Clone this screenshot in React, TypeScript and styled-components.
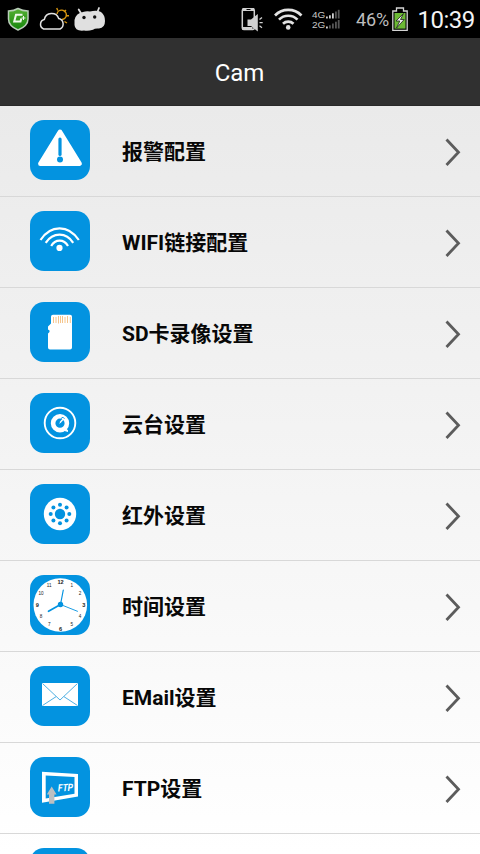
import React from 'react';
import styled, { createGlobalStyle } from 'styled-components';

const GlobalStyle = createGlobalStyle`
  body { margin: 0; overflow: hidden; }
`;

const Screen = styled.div`
  height: 854px;
  width: 480px;
  overflow: hidden;
  display: flex;
  flex-direction: column;
  background: #fff;
  font-family: Roboto, "Noto Sans CJK SC", sans-serif;
`;

const StatusBar = styled.div`
  height: 38px;
  flex: none;
  background: #000;
  display: flex;
  justify-content: space-between;
`;

const StatusArt = styled.svg`
  display: block;
  flex: none;
`;

const StatusRight = styled.div`
  display: flex;
`;

const Percent = styled.span`
  width: 36px;
  font-size: 18px;
  line-height: 40px;
  letter-spacing: -0.15px;
  text-indent: 1px;
  color: #bdbdbd;
  white-space: nowrap;
`;

const Clock = styled.span`
  width: 63px;
  font-size: 24px;
  line-height: 40px;
  letter-spacing: -0.5px;
  text-indent: 0.5px;
  color: #f4f4f4;
  white-space: nowrap;
`;

const TitleBar = styled.header`
  height: 68px;
  flex: none;
  background: #303030;
  color: #fff;
  font-size: 24px;
  line-height: 70px;
  text-align: center;
  text-indent: -1px;
  box-sizing: border-box;
  border-bottom: 1px solid #292929;
`;

const List = styled.main`
  flex: 1;
  overflow: hidden;
  background: linear-gradient(#eaeaea, #fff);
`;

const Row = styled.div`
  height: 91px;
  box-sizing: border-box;
  border-bottom: 1px solid #d8d8d8;
  display: flex;
  align-items: flex-start;
  padding: 14px 19px 0 30px;
`;

const Tile = styled.svg`
  width: 60px;
  height: 60px;
  flex: none;
  border-radius: 14px;
  background: #0393e0;
`;

const Label = styled.span`
  flex: 1;
  margin-left: 32px;
  font-size: 21px;
  font-weight: 700;
  line-height: 64px;
  color: #080808;
  white-space: nowrap;
`;

const Arrow = styled.svg`
  width: 16px;
  height: 30px;
  margin-top: 17px;
`;

const StatusLeftIcons = () => (
  <StatusArt width="110" height="38" viewBox="0 0 110 38">
    <defs>
      <linearGradient id="shield" x2="0" y2="1">
        <stop stopColor="#55b034" />
        <stop offset="1" stopColor="#14850a" />
      </linearGradient>
    </defs>
    <path d="M18 8.500 Q22.500 11 28 11 V19 Q28 26 18 30 Q8.500 26 8.500 19 V11 Q14 11 18 8.500Z" fill="url(#shield)" stroke="#b9cdb9" strokeWidth="1.500" />
    <path d="M22.500 14.700 H16 L14.200 21.500 H20.500 L21.300 18.500" fill="none" stroke="#eef8ea" strokeWidth="2" />
    <path d="M23.500 16 V20 M21.500 18 H25.500" stroke="#eef8ea" strokeWidth="1" />
    <g stroke="#d9970f" strokeWidth="1.400" fill="none">
      <path d="M57 14 A4.700 4.700 0 1 1 62 19.500" />
      <path d="M56.700 8 L57.800 10.500 M66 10 L64 12 M66 15.700 H69 M64.500 21.500 L67 23" />
    </g>
    <path d="M43.700 29 A5 5 0 0 1 44.300 19.500 A7.500 7.500 0 0 1 58.700 18.500 A5.600 5.600 0 0 1 60 29 Z" fill="#000" stroke="#e2e2e2" strokeWidth="1.500" />
    <path d="M78.700 9.500 L81.500 14 M99 8 L97 13" stroke="#ddd" strokeWidth="1.800" strokeLinecap="round" />
    <path d="M74.500 20 Q76 13 83 12 Q86 11 90 11.500 Q97 10 101 12 Q105 15 105 21 Q105 28 99 28.500 Q95 28 93 29.700 Q88 31.500 84 30.500 Q75 31.500 74.500 25Z" fill="#e0e0e0" />
    <circle cx="84" cy="17.500" r="1.700" fill="#111" />
    <circle cx="94.700" cy="17" r="1.700" fill="#111" />
  </StatusArt>
);

const StatusSignals = () => (
  <StatusArt width="116" height="38" viewBox="239.500 0 116 38">
    <rect x="242.800" y="9" width="12" height="20.500" rx="1.500" fill="none" stroke="#d0d0d0" strokeWidth="1.500" />
    <path d="M243 9.500 H254.700 M243 28.500 H253" stroke="#d0d0d0" strokeWidth="3" />
    <path d="M247 9.500 H251" stroke="#000" strokeWidth="1" />
    <path d="M248 19.500 H251.500 L258.300 14 V31.500 L251.500 26 H248Z" fill="#d0d0d0" />
    <path d="M260 19.500 L262.500 17.500 M260 22.700 H263.200 M260 25.800 L262.500 27.700" stroke="#d0d0d0" strokeWidth="1.300" />
    <g fill="none" stroke="#e2e2e2" strokeWidth="2.700">
      <path d="M275.500 15.500 A18.500 18.500 0 0 1 302 15.500" />
      <path d="M279.500 19.600 A13 13 0 0 1 298 19.600" />
      <path d="M283.500 23.700 A7.700 7.700 0 0 1 294 23.700" />
    </g>
    <circle cx="288.700" cy="27.400" r="2.300" fill="#e2e2e2" />
    <g fill="#c8c8c8" fontFamily="Liberation Sans, sans-serif" fontSize="8.700">
      <text x="312.500" y="18.300" textLength="13.300" lengthAdjust="spacingAndGlyphs">4G</text>
      <text x="312.500" y="28.400" textLength="13.300" lengthAdjust="spacingAndGlyphs">2G</text>
    </g>
    <g fill="#cfcfcf">
      <rect x="326.500" y="16.500" width="1.800" height="2" />
      <rect x="329.500" y="15.300" width="1.800" height="3.200" />
      <rect x="332.500" y="13.300" width="1.800" height="5.200" />
      <rect x="326.500" y="26.500" width="1.800" height="2" />
    </g>
    <g fill="#555">
      <rect x="335.500" y="11.500" width="1.800" height="7" />
      <rect x="338.300" y="9.800" width="1.800" height="8.700" />
      <rect x="329.500" y="25.300" width="1.800" height="3.200" />
      <rect x="332.500" y="23.500" width="1.800" height="5" />
      <rect x="335.500" y="21.700" width="1.800" height="6.800" />
      <rect x="338.300" y="20" width="1.800" height="8.500" />
    </g>
  </StatusArt>
);

const Battery = () => (
  <StatusArt width="26" height="38" viewBox="391.500 0 26 38">
    <path d="M393.300 30.300 V11 H397 V8 H404 V11 H407.700 V30.300Z" fill="#000" stroke="#d5d5d5" strokeWidth="1.300" />
    <rect x="395" y="13" width="11" height="15.600" fill="#6cb935" />
    <path d="M404 13.500 L396.500 21 H400.300 L397 28 L404.700 19.500 H401Z" fill="#efefef" stroke="#222" strokeWidth=".8" />
  </StatusArt>
);

const alarm = (
  <>
    <path d="M30 11.700 L49.700 43.700 H10.300Z" fill="#fff" stroke="#fff" strokeWidth="4.400" strokeLinejoin="round" />
    <path d="M30 19 V34.500" stroke="#0393e0" strokeWidth="3.200" strokeLinecap="round" />
    <circle cx="30" cy="39.500" r="3" fill="#0393e0" />
  </>
);

const wifi = (
  <>
    <g fill="none" stroke="#fff" strokeWidth="2.200">
      <path d="M10.500 29 Q18 17.300 29.600 17.300 Q41 17.300 48.800 29" />
      <path d="M15.700 31.800 Q21 23.600 29.600 23.600 Q38 23.600 43.200 31.800" />
      <path d="M21.200 35 Q24.200 29.700 29.600 29.700 Q35 29.700 38 35" />
    </g>
    <circle cx="29.500" cy="36.900" r="3.100" fill="#fff" />
  </>
);

const card = (
  <>
    <path d="M23 12.700 H40 Q42 12.700 42 14.700 V45.500 Q42 47.500 40 47.500 H20 Q18 47.500 18 45.500 V31.500 L19.500 30 V28.500 L18 27.500 V24.500 L21 21.500 V14.700 Q21 12.700 23 12.700Z" fill="#fff" />
    <path d="M23.500 15 V21 M26 15 V21 M28.500 14 V21.500 M30.500 14 V21 M32.500 14 V21 M35 15 V21 M37.500 14 V21 M40.300 15 V21" stroke="#f5c58c" strokeWidth="1" />
  </>
);

const pan = (
  <>
    <circle cx="30" cy="30" r="15.300" fill="none" stroke="#fff" strokeWidth="1.900" />
    <circle cx="30" cy="30.200" r="6.900" fill="none" stroke="#fff" strokeWidth="4.600" />
    <path d="M34 33.500 L38 37.200 V39 Q34.500 39 32 36Z" fill="#fff" />
    <path d="M29.200 31 L30.300 28.300 L32.500 25.800 L33.300 27 L31.300 29.300Z" fill="#fff" />
    <path d="M31 25.500 L33 24.200 L34.500 25.800" fill="none" stroke="#0393e0" strokeWidth=".9" />
  </>
);

const infrared = (
  <>
    <circle cx="30" cy="30" r="16.200" fill="#fff" />
    <circle cx="30" cy="30" r="5.200" fill="#0393e0" />
    {Array.from({ length: 8 }, (_, i) => (
      <circle
        key={i}
        cx={30 + 9.300 * Math.cos((i * Math.PI) / 4)}
        cy={30 + 9.300 * Math.sin((i * Math.PI) / 4)}
        r="2"
        fill="#0393e0"
      />
    ))}
  </>
);

const clock = (
  <>
    <circle cx="30.300" cy="30" r="26.800" fill="#fff" />
    <g fontFamily="Liberation Sans, sans-serif" fill="#222" textAnchor="middle">
      {Array.from({ length: 12 }, (_, i) => {
        const hour = i + 1;
        const main = hour % 3 === 0;
        const angle = (hour * Math.PI) / 6;
        return (
          <text
            key={hour}
            x={30.500 + (main ? 23.200 : 22.500) * Math.sin(angle)}
            y={30.200 - (main ? 23.600 : 22.500) * Math.cos(angle) + (main ? 1.900 : 1.500)}
            fontSize={main ? 5.600 : 4.600}
            fontWeight={main ? 700 : 400}
          >
            {hour}
          </text>
        );
      })}
    </g>
    <g stroke="#0393e0" strokeLinecap="round">
      <path d="M30.500 29.500 L33.300 15" strokeWidth="1.200" />
      <path d="M30.500 29.500 L18.500 36.300" strokeWidth="1.700" />
      <path d="M30.500 29.500 L47.500 36.300" strokeWidth=".9" />
    </g>
    <circle cx="30.500" cy="29.500" r="2.700" fill="#0393e0" />
  </>
);

const mail = (
  <>
    <rect x="12" y="17" width="36" height="23" fill="#fff" />
    <path d="M12.500 17.500 L30 34 L47.500 17.500 M12.500 39.500 L26 30.700 M47.500 39.500 L34 30.700" fill="none" stroke="#3ba6e0" strokeWidth=".9" />
  </>
);

const ftp = (
  <>
    <path fillRule="evenodd" d="M12 14.700 L48 16.900 V39.500 L12 45.800Z M15.700 18.500 V41.500 L44.500 36.700 V19.900Z" fill="#fff" />
    <text transform="matrix(.86 -.05 -.13 1 27.600 34.600)" fontFamily="Roboto, sans-serif" fontSize="10" fontWeight="700" textLength="17.500" lengthAdjust="spacingAndGlyphs" fill="#fff">FTP</text>
    <path d="M21.700 29.500 L26.600 37.500 H24.400 V46.800 H19 V37.500 H16.800Z" fill="#bdbfc1" />
  </>
);

const items = [
  { label: '报警配置', icon: alarm },
  { label: 'WIFI链接配置', icon: wifi },
  { label: 'SD卡录像设置', icon: card },
  { label: '云台设置', icon: pan },
  { label: '红外设置', icon: infrared },
  { label: '时间设置', icon: clock },
  { label: 'EMail设置', icon: mail },
  { label: 'FTP设置', icon: ftp },
  { label: '', icon: null },
];

export default function App() {
  return (
    <Screen>
      <GlobalStyle />
      <StatusBar>
        <StatusLeftIcons />
        <StatusRight>
          <StatusSignals />
          <Percent>46%</Percent>
          <Battery />
          <Clock>10:39</Clock>
        </StatusRight>
      </StatusBar>
      <TitleBar>Cam</TitleBar>
      <List>
        {items.map((item, index) => (
          <Row key={index}>
            <Tile viewBox="0 0 60 60">{item.icon}</Tile>
            <Label>{item.label}</Label>
            <Arrow viewBox="0 0 16 30">
              <path d="M1.500 2.500 L13.500 15.300 L1.500 28" fill="none" stroke="#5c5c5c" strokeWidth="2.800" />
            </Arrow>
          </Row>
        ))}
      </List>
    </Screen>
  );
}
